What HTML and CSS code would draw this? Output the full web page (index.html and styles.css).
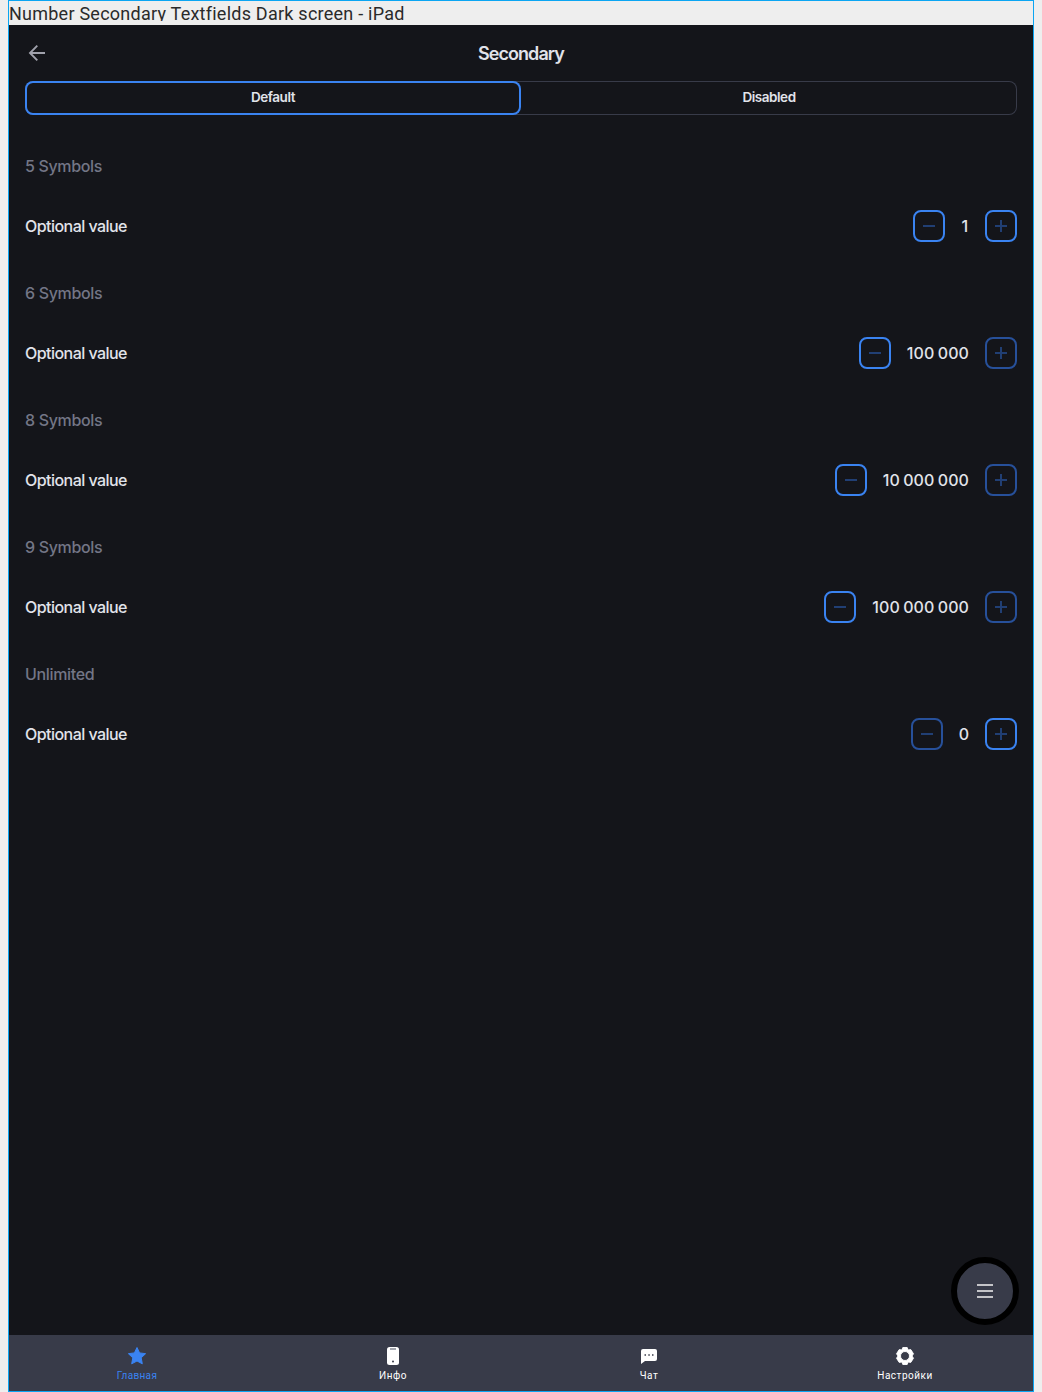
FILE: index.html
```html
<!DOCTYPE html>
<html lang="en">
<head>
<meta charset="utf-8">
<title>Number Secondary Textfields</title>
<link rel="stylesheet" href="styles.css">
</head>
<body>
<div class="frame">
  <div class="frame-title">Number Secondary Textfields Dark screen - iPad</div>
  <div class="screen">
    <header class="header">
      <svg class="back" width="24" height="24" viewBox="0 0 24 24"><path d="M20 12H5.500M12.300 4.700L5 12L12.300 19.300" fill="none" stroke="#a0a1ac" stroke-width="1.900"/></svg>
      <h1 class="heading">Secondary</h1>
    </header>
    <div class="tabs">
      <div class="tab tab-active">Default</div>
      <div class="tab">Disabled</div>
    </div>
    <main class="list">
      <section class="group">
        <h2 class="label">5 Symbols</h2>
        <div class="row"><span class="name">Optional value</span>
          <div class="stepper"><button class="btn minus"></button><span class="value value-one">1</span><button class="btn plus"></button></div></div>
      </section>
      <section class="group">
        <h2 class="label">6 Symbols</h2>
        <div class="row"><span class="name">Optional value</span>
          <div class="stepper"><button class="btn minus"></button><span class="value">100 000</span><button class="btn plus off"></button></div></div>
      </section>
      <section class="group">
        <h2 class="label">8 Symbols</h2>
        <div class="row"><span class="name">Optional value</span>
          <div class="stepper"><button class="btn minus"></button><span class="value">10 000 000</span><button class="btn plus off"></button></div></div>
      </section>
      <section class="group">
        <h2 class="label">9 Symbols</h2>
        <div class="row"><span class="name">Optional value</span>
          <div class="stepper"><button class="btn minus"></button><span class="value">100 000 000</span><button class="btn plus off"></button></div></div>
      </section>
      <section class="group">
        <h2 class="label">Unlimited</h2>
        <div class="row"><span class="name">Optional value</span>
          <div class="stepper"><button class="btn minus off"></button><span class="value value-zero">0</span><button class="btn plus"></button></div></div>
      </section>
    </main>
    <button class="fab"><svg width="18" height="16" viewBox="0 0 18 16"><path d="M1 2H17M1 8H17M1 14H17" stroke="#f2f2f2" stroke-width="1.700"/></svg></button>
    <nav class="nav">
      <a class="nav-item nav-current">
        <svg width="20" height="20" viewBox="0 0 20 20"><path d="M10 1.500L12.600 6.900L18.600 7.700L14.200 11.800L15.300 17.800L10 15L4.700 17.800L5.800 11.800L1.400 7.700L7.400 6.900Z" fill="#3a83f1" stroke="#3a83f1" stroke-width="1" stroke-linejoin="round"/></svg>
        <span>Главная</span></a>
      <a class="nav-item">
        <svg width="20" height="20" viewBox="0 0 20 20"><rect x="4" y="1" width="12" height="18" rx="2.500" fill="#fff"/><path d="M7 3H13" stroke="#858792" stroke-width="1.500"/><circle cx="10" cy="15.500" r="1" fill="#383b49"/></svg>
        <span>Инфо</span></a>
      <a class="nav-item">
        <svg width="20" height="20" viewBox="0 0 20 20"><path d="M4 3H16Q18 3 18 5V13Q18 15 16 15H6L2 18V5Q2 3 4 3Z" fill="#fff"/><path d="M5.500 9H7M9.300 9H10.800M13 9H14.500" stroke="#383b49" stroke-width="1.400"/></svg>
        <span>Чат</span></a>
      <a class="nav-item">
        <svg width="20" height="20" viewBox="0 0 20 20"><path d="M7.800 1.500H12.200L13.100 4L15.800 3.600L18.500 7.800L17 10L18.500 12.200L15.800 16.400L13.100 16L12.200 18.500H7.800L6.900 16L4.200 16.400L1.500 12.200L3 10L1.500 7.800L4.200 3.600L6.900 4ZM10 5.500A4.500 4.500 0 1 0 10 14.500A4.500 4.500 0 1 0 10 5.500Z" fill="#fff" fill-rule="evenodd" stroke="#fff" stroke-width=".9" stroke-linejoin="round"/></svg>
        <span>Настройки</span></a>
    </nav>
  </div>
</div>
</body>
</html>
```
FILE: styles.css
```css
* { box-sizing: border-box; }
body { margin: 0; background: #eee; overflow: hidden; }
.frame {
  width: 1026px; height: 1392px; margin-left: 8px;
  border: 1px solid #0ba5f2;
  display: flex; flex-direction: column;
}
.frame-title {
  height: 20px; margin-bottom: 4px; overflow: hidden;
  font: 400 18px/25px Roboto, sans-serif; letter-spacing: .24px;
  color: #2a2a2a; white-space: nowrap;
}
.screen {
  flex: 1; position: relative; display: flex; flex-direction: column;
  background: #14151a; color: #e1e3ea; font-family: Inter, sans-serif;
}
.header { height: 56px; padding: 0 16px; display: grid; grid-template-columns: 24px 1fr 24px; align-items: center; }
.heading { margin: 0; text-align: center; font-size: 18px; font-weight: 600; letter-spacing: -.95px; line-height: 24px; padding-top: 1px; }
.tabs { height: 34px; margin: 0 16px; display: flex; border-radius: 8px; box-shadow: inset 0 0 0 1px #383b49; }
.tab { flex: 1; border-radius: 8px; text-align: center; font-size: 13.5px; font-weight: 600; line-height: 32px; letter-spacing: -.45px; }
.tab-active { box-shadow: inset 0 0 0 2px #3a83f1; }
.list { padding: 39px 16px 0; flex: 1; }
.group { height: 127px; }
.label { margin: 0; font-size: 16px; font-weight: 500; line-height: 24px; letter-spacing: -.34px; color: #737686; }
.row { margin-top: 32px; height: 32px; display: flex; align-items: center; justify-content: space-between; }
.name { font-size: 16px; font-weight: 500; letter-spacing: -.54px; }
.stepper { display: flex; align-items: center; gap: 16px; }
.value { font-size: 16px; font-weight: 500; letter-spacing: .1px; word-spacing: -1.1px; }
.value-one { padding: 0 .8px 0 .4px; }
.value-zero { letter-spacing: -.2px; }
.btn {
  width: 32px; height: 32px; padding: 0; border: 2px solid #3a83f1; border-radius: 8px;
  background: linear-gradient(#213f74, #213f74) center / 12px 2px no-repeat;
}
.plus { background: linear-gradient(#213f74, #213f74) center / 12px 2px no-repeat, linear-gradient(#213f74, #213f74) center / 2px 12px no-repeat; }
.off { border-color: #27509a; }
.fab {
  position: absolute; right: 14px; bottom: 66px; width: 68px; height: 68px; padding: 0;
  border: 6px solid #000; border-radius: 50%; background: #383b49;
  display: flex; align-items: center; justify-content: center;
}
.nav { height: 56px; display: flex; background: #383b49; }
.nav-item { flex: 1; display: flex; flex-direction: column; align-items: center; padding-top: 11px; color: #fff; font: 400 10px/12px Roboto, sans-serif; letter-spacing: .5px; }
.nav-item span { margin-top: 4px; }
.nav-current { color: #3a83f1; letter-spacing: .35px; }
```
